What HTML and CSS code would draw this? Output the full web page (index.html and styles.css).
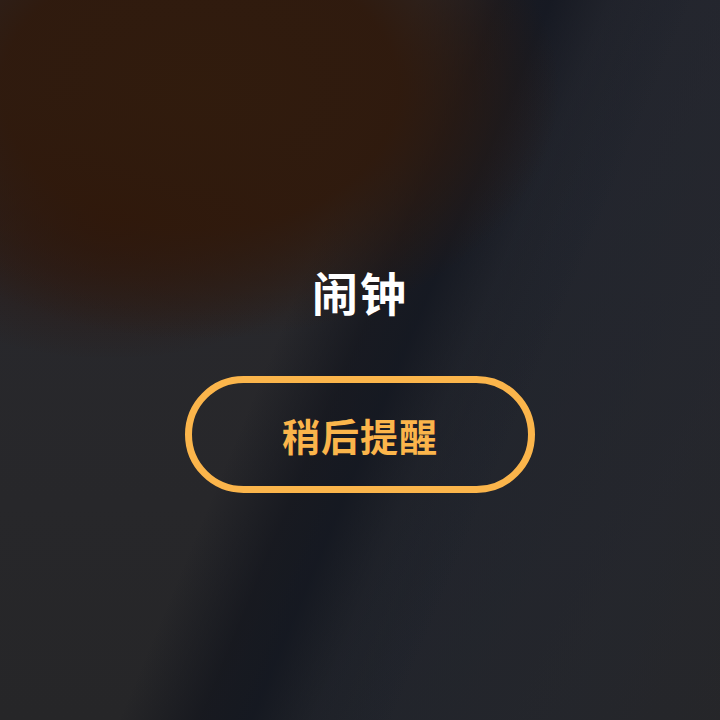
FILE: index.html
```html
<!DOCTYPE html>
<html lang="zh-CN">
<head>
  <meta charset="UTF-8" />
  <meta name="viewport" content="width=device-width, initial-scale=1" />
  <title>闹钟</title>
  <link rel="stylesheet" href="styles.css">
</head>
<body>
  <main class="alarm">
    <h1 class="alarm-title">闹钟</h1>
    <button class="snooze-btn">稍后提醒</button>
  </main>
</body>
</html>
```

FILE: styles.css
```css
:root {
  --accent: #fbb54b;
  --text: #ffffff;
  --base: #262628;
}
* {
  box-sizing: border-box;
  margin: 0;
  padding: 0;
}
html, body {
  width: 100%;
  height: 100%;
}
body {
  font-family: "Noto Sans CJK SC", "Noto Sans", sans-serif;
  color: var(--text);
  overflow: hidden;
  background:
    radial-gradient(ellipse 360px 250px at 200px 90px, rgba(49, 27, 12, 0.97) 0%, rgba(48, 25, 11, 0.9) 55%, rgba(44, 24, 14, 0) 100%),
    radial-gradient(ellipse 240px 140px at 110px 220px, rgba(44, 18, 8, 0.8), rgba(44, 18, 8, 0) 100%),
    linear-gradient(112.6deg, rgba(14, 17, 26, 0) 41%, rgba(14, 17, 26, 0.6) 49%, rgba(14, 19, 30, 0.7) 54%, rgba(20, 26, 38, 0.35) 60%, rgba(20, 26, 36, 0) 68%),
    linear-gradient(112.6deg, rgba(30, 35, 46, 0) 55%, rgba(30, 35, 46, 0.55) 66%, rgba(34, 38, 48, 0.45) 85%, rgba(36, 38, 46, 0.2) 100%),
    linear-gradient(180deg, #2a292e 0%, #28282c 40%, #262628 100%);
  background-color: var(--base);
}

/* ───── Alarm panel ───── */
.alarm {
  display: flex;
  flex-direction: column;
  align-items: center;
  padding-top: 263px;
}
.alarm-title {
  font-size: 46px;
  font-weight: 700;
  line-height: 56px;
  letter-spacing: 2px;
}
.snooze-btn {
  margin-top: 57px;
  width: 350px;
  height: 117px;
  border: 7px solid var(--accent);
  border-radius: 60px;
  background: transparent;
  color: var(--accent);
  font-family: inherit;
  font-size: 38px;
  font-weight: 700;
  letter-spacing: 1px;
  cursor: pointer;
}
```
